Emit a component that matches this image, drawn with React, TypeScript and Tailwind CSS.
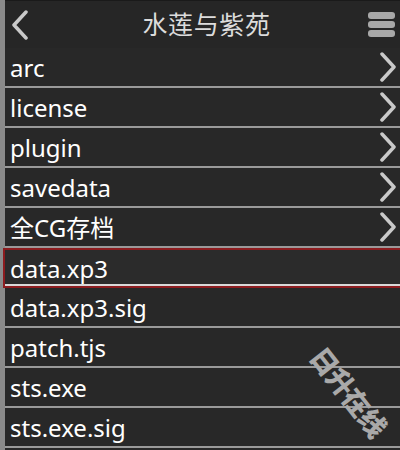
const items = [
  { name: 'arc', dir: true },
  { name: 'license', dir: true },
  { name: 'plugin', dir: true },
  { name: 'savedata', dir: true },
  { name: '全CG存档', dir: true },
  { name: 'data.xp3', dir: false, selected: true },
  { name: 'data.xp3.sig', dir: false },
  { name: 'patch.tjs', dir: false },
  { name: 'sts.exe', dir: false },
  { name: 'sts.exe.sig', dir: false },
];

function Chevron({ left }: { left?: boolean }) {
  return (
    <svg width="18" height="30" viewBox="0 0 18 30" className="shrink-0">
      <path
        d={left ? 'M15 2 L3 15 L15 28' : 'M3 2 L15 15 L3 28'}
        fill="none"
        stroke="#c9c9c9"
        strokeWidth="3.5"
        strokeLinecap="round"
        strokeLinejoin="round"
      />
    </svg>
  );
}

export default function App() {
  return (
    <div
      className="relative w-[400px] h-[450px] overflow-hidden bg-[#282828] flex"
      style={{ fontFamily: '"Noto Sans", "Noto Sans CJK SC", sans-serif' }}
    >
      <div className="w-[5px] shrink-0 bg-[#8a8a8a]" />
      <div className="flex-1 flex flex-col">
        <header className="h-[48px] shrink-0 flex items-center bg-[#262626] border-t border-[#1a1a1a]">
          <div className="ml-[6px]">
            <Chevron left />
          </div>
          <h1 className="flex-1 text-center text-[25px] text-[#dcdcdc] tracking-wide pl-[16px]">水莲与紫苑</h1>
          <div className="mr-[5px] flex flex-col gap-[2px]">
            <span className="block w-[27px] h-[7px] rounded-[3px] bg-[#a8a8a8]" />
            <span className="block w-[27px] h-[7px] rounded-[3px] bg-[#a8a8a8]" />
            <span className="block w-[27px] h-[7px] rounded-[3px] bg-[#a8a8a8]" />
          </div>
        </header>
        <ul className="flex flex-col">
          {items.map((it) => (
            <li
              key={it.name}
              className={
                it.selected
                  ? 'h-[40px] shrink-0 flex items-center -ml-[2px] pl-[5px] border-2 border-[#8c1c1f] border-r-0 bg-[#2b2b2b] shadow-[inset_0_-2px_0_#d8d8d8]'
                  : 'h-[40px] shrink-0 flex items-center pl-[5px] border-b-2 border-[#9a9a9a] bg-[#282828]'
              }
            >
              <span className="flex-1 text-[24px] text-white leading-none pt-[2px]">{it.name}</span>
              {it.dir && (
                <div className="mr-[3px]">
                  <Chevron />
                </div>
              )}
            </li>
          ))}
        </ul>
      </div>
      <div className="absolute left-[296px] top-[372px] rotate-[52deg] whitespace-nowrap text-[27px] font-black text-[#a9a9a9] tracking-[-1px]">
        日升在线
      </div>
    </div>
  );
}
